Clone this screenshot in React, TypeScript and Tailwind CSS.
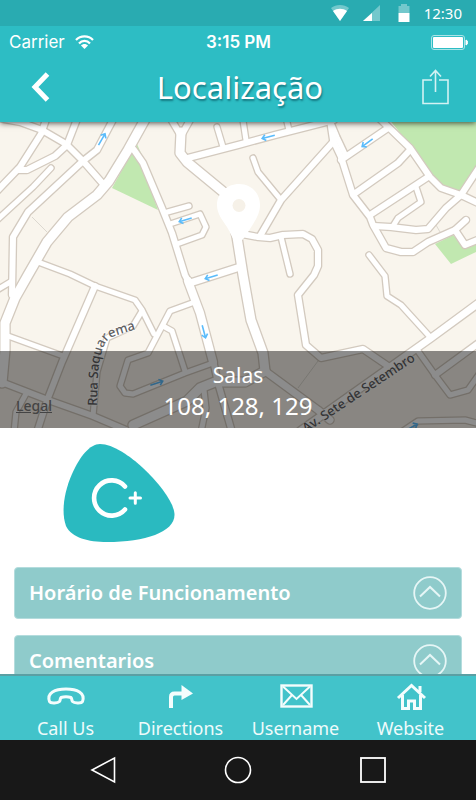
import React from "react";

type Road = { d: string; w: number };

const roads: Road[] = [
  { w: 9, d: "M148 114 L128 150 L109 181 L97 195 L68 217 L47 242 L28 275 L15 298 L5 323 L5 350 L2 383" },
  { w: 6, d: "M-2 118 L20 122 L42 130 L66 144 L83 161 L104 185" },
  { w: 6, d: "M48 114 L41 134 L20 167 L-3 191" },
  { w: 6, d: "M79 114 L67 145 L55 156 L27 170 L18 170" },
  { w: 6, d: "M116 114 L97 150 L83 161 L28 212 L13 237 L12 295" },
  { w: 5, d: "M51 168 L33 187 L-3 220" },
  { w: 5, d: "M38 262 L70 274 L95 286 L135 300 L142 310 L154 334" },
  { w: 6, d: "M134 150 L143 163 L162 208 L172 233 L185 275 L188 281" },
  { w: 8, d: "M188 281 L200 313 L213 362" },
  { w: 5, d: "M164 213 L189 206" },
  { w: 5, d: "M170 224 L200 214 L206 227 L202 235 L177 244" },
  { w: 6, d: "M168 114 L181 136 L190 120" },
  { w: 9, d: "M181 132 L180 153 L187 162 L227 195 L237 237 L243 275 L251 320 L263 353 L265 371" },
  { w: 7, d: "M265 371 L318 410 L330 420" },
  { w: 6, d: "M188 158 L238 145 L275 135 L334 120" },
  { w: 5, d: "M217 127 L223 147" },
  { w: 5, d: "M242 114 L246 140" },
  { w: 5, d: "M285 114 L289 130" },
  { w: 6, d: "M330 120 L333 140 L341 157 L353 195 L370 217 L373 225 L386 248 L401 252 L413 252 L428 242 L455 230 L466 220" },
  { w: 6, d: "M333 142 L281 200 L260 236" },
  { w: 5, d: "M253 158 L258 172 L281 200" },
  { w: 5, d: "M332 125 L337 137 L346 156" },
  { w: 6, d: "M341 160 L388 128" },
  { w: 6, d: "M379 118 L410 148 L430 177 L441 188 L461 195 L480 204" },
  { w: 6, d: "M410 150 L398 163 L354 194" },
  { w: 6, d: "M428 177 L370 215" },
  { w: 5, d: "M416 187 L421 202 L398 218 L393 226" },
  { w: 6, d: "M374 226 L391 227 L416 230 L428 229 L446 208 L461 195 L480 166" },
  { w: 6, d: "M455 230 L465 245 L480 239" },
  { w: 5, d: "M369 255 L385 276 L387 296 L401 305 L431 338" },
  { w: 6, d: "M242 234 L258 237 L270 238 L283 235 L303 234 L312 239 L318 250 L318 266 L314 275 L298 295 L306 345 L321 358 L363 349 L388 366" },
  { w: 5, d: "M281 237 L290 274" },
  { w: 7, d: "M190 283 L240 267" },
  { w: 5, d: "M-3 290 L12 281" },
  { w: 5, d: "M8 336 L63 356" },
  { w: 6, d: "M95 286 L62 362 L48 398 L37 432" },
  { w: 6, d: "M4 383 L48 400 L93 416 L126 430" },
  { w: 5, d: "M27 392 L16 412 L14 432" },
  { w: 5, d: "M142 311 L133 326 L107 338 L97 372 L93 416" },
  { w: 5, d: "M192 303 L170 311 L148 353 L128 360 L120 386 L125 393 L133 394 L185 373 L213 363" },
  { w: 5, d: "M163 326 L172 331 L185 371" },
  { w: 9, d: "M265 371 L245 382 L215 382 L200 388 L187 401 L133 425" },
  { w: 5, d: "M204 390 L206 408 L201 432" },
  { w: 6, d: "M213 360 L218 383 L232 432" },
  { w: 7, d: "M480 302 L431 338 L300 431" },
  { w: 5, d: "M418 351 L435 375 L450 395 L468 390 L480 373" },
  { w: 6, d: "M480 342 L435 375" },
  { w: 5, d: "M400 433 L418 421 L465 420 L480 424" },
];

const arrows: { x: number; y: number; angle: number }[] = [
  { x: 102, y: 139, angle: -60 },
  { x: 185, y: 220, angle: 163 },
  { x: 268, y: 137, angle: 166 },
  { x: 367, y: 143, angle: 144 },
  { x: 211, y: 277, angle: 163 },
  { x: 204, y: 332, angle: 75 },
  { x: 157, y: 383, angle: -18 },
  { x: 412, y: 427, angle: -30 },
];

function StreetMap() {
  return (
    <svg
      className="block h-[306px] w-full"
      viewBox="0 122 476 306"
      preserveAspectRatio="xMidYMid slice"
      role="img"
      aria-label="Mapa"
    >
      <rect x="-500" y="100" width="1500" height="400" fill="#f9f5ed" />
      <g fill="#c1e8b0">
        <path d="M132 152 L112 188 L158 210 L142 165 Z" />
        <path d="M137 144 L135 152 L144 160 Z" />
        <path d="M388 118 L480 118 L480 170 L461 193 L441 187 L410 145 Z" />
        <path d="M435 244 L453 235 L465 248 L480 243 L480 250 L451 264 Z" />
      </g>
      <g stroke="#dcd8d0" strokeWidth="1" fill="none">
        <path d="M32 217 L47 232 M436 225 L440 232 M318 361 L298 388" />
      </g>
      <g fill="none" stroke="#d3cabf" strokeLinecap="round" strokeLinejoin="round">
        {roads.map((r, i) => (
          <path key={i} d={r.d} strokeWidth={r.w + 2.6} />
        ))}
      </g>
      <g fill="none" stroke="#ffffff" strokeLinecap="round" strokeLinejoin="round">
        {roads.map((r, i) => (
          <path key={i} d={r.d} strokeWidth={r.w} />
        ))}
      </g>
      <g fill="none" stroke="#5bbcfb" strokeWidth="1.6">
        {arrows.map((a, i) => (
          <path key={i} d="M-7 0 H6 M2.5 -3 L6 0 L2.5 3" transform={`translate(${a.x} ${a.y}) rotate(${a.angle})`} />
        ))}
      </g>
      <path
        fill="#ffffff"
        d="M239 184 C251 184 260 193 260 205 C260 214 255 221 250 229 C246 235 243 241 238 243 C233 241 231 234 227 227 C222 219 217 214 217 205 C217 193 227 184 239 184 Z"
      />
      <circle cx="239" cy="205.5" r="6.5" fill="#f6f1e8" />
      <defs>
        <path id="rua" d="M97 406 L98 376 C99 360 102 344 110 338 C116 335 124 333 146 326" />
        <path id="avenida" d="M306 433 L440 344" />
      </defs>
      <g
        className="font-['Noto_Sans',sans-serif]"
        fill="#5f5f63"
        stroke="#ffffff"
        strokeOpacity="0.5"
        strokeWidth="2"
        paintOrder="stroke"
      >
        <text className="text-[13px] font-medium">
          <textPath href="#rua">Rua Saquarema</textPath>
        </text>
        <text className="text-[13px] font-medium">
          <textPath href="#avenida">Av. Sete de Setembro</textPath>
        </text>
      </g>
    </svg>
  );
}

function AndroidStatus() {
  return (
    <div className="flex h-[26px] items-center justify-end bg-[#29abb1] pr-3.5 text-white">
      <svg className="mr-3.5" width="18" height="16" viewBox="0 0 18 16">
        <path d="M0 3 C5 -1 13 -1 18 3 L9 16 Z" fill="#fff" fillOpacity="0.35" />
        <path d="M2 6 C6 3 12 3 16 6 L9 16 Z" fill="#fff" />
      </svg>
      <svg className="mr-[18px]" width="17" height="16" viewBox="0 0 17 16">
        <path d="M17 0 V16 H0 Z" fill="#fff" fillOpacity="0.35" />
        <path d="M9 8 V16 H0 Z" fill="#fff" />
      </svg>
      <svg className="mr-3.5" width="12" height="18" viewBox="0 0 12 18">
        <path d="M0.5 2 H3 V0 H9 V2 H11.5 V9 H0.5 Z" fill="#fff" fillOpacity="0.35" />
        <path d="M0.5 9 H11.5 V18 H0.5 Z" fill="#fff" />
      </svg>
      <span className="text-[15px] leading-5">12:30</span>
    </div>
  );
}

function CarrierStatus() {
  return (
    <div className="grid h-8 grid-cols-3 items-center pr-2 pl-[9px] font-['Inter',sans-serif] text-[17px] leading-5">
      <span className="flex items-center gap-2.5">
        Carrier
        <svg width="19" height="14" viewBox="0 0 19 14" fill="none" stroke="#fff" strokeWidth="2.2">
          <path d="M1 5 C5.5 0.2 13.5 0.2 18 5" />
          <path d="M4 8.5 C7 5 12 5 15 8.5" />
          <path d="M6 10.5 C8 8.5 11 8.5 13 10.5 L9.5 14 Z" fill="#fff" stroke="none" />
        </svg>
      </span>
      <span className="text-center font-semibold">3:15 PM</span>
      <svg className="justify-self-end" width="37" height="15" viewBox="0 0 37 15">
        <rect x="0.5" y="0.5" width="33" height="14" rx="2.5" fill="none" stroke="#a9e4e7" />
        <rect x="2" y="2" width="30" height="11" rx="1" fill="#fff" />
        <path d="M35 5 C37 5 37 10 35 10 Z" fill="#fff" stroke="#fff" />
      </svg>
    </div>
  );
}

function Header() {
  return (
    <header className="relative z-10 bg-[#2dbdc4] text-white shadow-[0_1px_6px_rgba(0,0,0,0.7)]">
      <AndroidStatus />
      <CarrierStatus />
      <div className="grid h-16 grid-cols-[1fr_auto_1fr] items-center pr-[27px] pb-1.5 pl-[31px]">
        <button type="button" aria-label="Voltar" className="justify-self-start">
          <svg width="19" height="30" viewBox="0 0 19 30" fill="none" stroke="#fff" strokeWidth="5">
            <path d="M16.5 2 L4 15 L16.5 28" />
          </svg>
        </button>
        <h1 className="text-[31px] leading-10 [text-shadow:1px_2px_2px_rgba(0,70,80,0.55)]">Localização</h1>
        <button type="button" aria-label="Compartilhar" className="justify-self-end">
          <svg width="27" height="36" viewBox="0 0 27 36" fill="none" stroke="#d3f2f3" strokeWidth="1.6">
            <path d="M10 11 H1 V34.5 H26 V11 H17" />
            <path d="M13.5 23 V1.5 M8 7.5 L13.5 1.5 L19 7.5" />
          </svg>
        </button>
      </div>
    </header>
  );
}

function Logo() {
  return (
    <svg className="mt-4 ml-[63px] block" width="112" height="99" viewBox="63 444 112 99" role="img" aria-label="C+">
      <path
        fill="#2abac0"
        d="M100 444 C113 444 130 456 143 468 C160 484 174.5 503 174.5 515 C174.5 532 145 542 107 542 C88 542 72 538 66 526 C61 512 64 492 72 474 C80 456 90 444 100 444 Z"
      />
      <g fill="none" stroke="#fff" strokeLinecap="round">
        <path strokeWidth="4.6" d="M125 486.5 A17.6 17.6 0 1 0 125 509.5" />
        <path strokeWidth="3" d="M130 498 H140.5 M135.3 492.7 V503.3" />
      </g>
    </svg>
  );
}

function Section({ title }: { title: string }) {
  return (
    <button
      type="button"
      aria-expanded="false"
      className="flex h-[52px] w-full items-center justify-between rounded border border-[#b4dcdd] bg-[#8fcbcb] px-3.5 text-left text-[20px] leading-6 font-semibold text-white"
    >
      {title}
      <svg width="34" height="34" viewBox="0 0 34 34" fill="none" stroke="#e6f6f6" strokeWidth="1.8">
        <circle cx="17" cy="17" r="15.8" />
        <path d="M7 20.5 L17 11 L27 20.5" strokeWidth="2" />
      </svg>
    </button>
  );
}

const tabs: { label: string; icon: React.ReactNode }[] = [
  {
    label: "Call Us",
    icon: (
      <path
        strokeWidth="3"
        strokeLinejoin="round"
        d="M3.5 17.5 C0.5 9 9 5 20 5 C31 5 39.5 9 36.5 17.5 C35 20 28 19 26.5 17.5 C25.5 16 26 14.5 25 13.5 C22 12.5 18 12.5 15 13.5 C14 14.5 14.5 16 13.5 17.5 C12 19 5 20 3.5 17.5 Z"
      />
    ),
  },
  {
    label: "Directions",
    icon: (
      <>
        <path strokeWidth="4" d="M10 24 V13 Q10 9.5 13.5 9.5 H23" />
        <path stroke="none" fill="#f4fdfd" d="M20.5 1 L32 9.5 L20.5 16 Z" />
      </>
    ),
  },
  {
    label: "Username",
    icon: (
      <>
        <rect x="5.5" y="1.5" width="30" height="21" strokeWidth="2.4" />
        <path strokeWidth="2" d="M7 2.5 L20.5 15 L34 2.5 M7 21 L16 11 M34 21 L25 11" />
      </>
    ),
  },
  {
    label: "Website",
    icon: (
      <>
        <path strokeWidth="3" d="M7 14 L20.5 1.5 L34 14 M29 8 V2" />
        <path strokeWidth="3" d="M11.5 11 V24.5 H17.5 V17 H23.5 V24.5 H29.5 V11" />
      </>
    ),
  },
];

function TabBar() {
  return (
    <nav className="grid h-[66px] grid-cols-4 border-t-2 border-[#5b9fa3] bg-[#42c3ca] px-2 text-[#effbfb]">
      {tabs.map((t) => (
        <a key={t.label} href="#" className="flex flex-col items-center pt-2">
          <svg className="overflow-visible" width="40" height="24" viewBox="0 0 40 24" fill="none" stroke="#f4fdfd">
            {t.icon}
          </svg>
          <span className="mt-2 text-[18px] leading-6">{t.label}</span>
        </a>
      ))}
    </nav>
  );
}

function SystemBar() {
  return (
    <nav className="grid h-[60px] grid-cols-3 place-items-center bg-[#181818] px-9">
      <button type="button" aria-label="Back">
        <svg width="26" height="28" viewBox="0 0 26 28" fill="none" stroke="#fff" strokeWidth="1.6">
          <path d="M24.5 2 V26 L2 14 Z" />
        </svg>
      </button>
      <button type="button" aria-label="Home">
        <svg width="28" height="28" viewBox="0 0 28 28" fill="none" stroke="#fff" strokeWidth="1.6">
          <circle cx="14" cy="14" r="12.5" />
        </svg>
      </button>
      <button type="button" aria-label="Recents">
        <svg width="28" height="28" viewBox="0 0 28 28" fill="none" stroke="#fff" strokeWidth="1.8">
          <rect x="2" y="2" width="24" height="24" />
        </svg>
      </button>
    </nav>
  );
}

export default function App() {
  return (
    <div className="flex h-screen flex-col overflow-hidden bg-white font-['Noto_Sans',sans-serif]">
      <Header />
      <main className="min-h-0 flex-1 overflow-hidden">
        <div className="relative">
          <StreetMap />
          <div className="absolute inset-x-0 bottom-0 h-[77px] bg-black/45 pt-2 text-center text-white">
            <p className="text-[21px] leading-8">Salas</p>
            <p className="text-[24px] leading-[30px]">108, 128, 129</p>
            <a href="#" className="absolute bottom-3 left-4 text-[14px] leading-5 font-medium text-[#444] underline">
              Legal
            </a>
          </div>
        </div>
        <Logo />
        <div className="mt-6 flex flex-col gap-4 px-3.5">
          <Section title="Horário de Funcionamento" />
          <Section title="Comentarios" />
        </div>
      </main>
      <TabBar />
      <SystemBar />
    </div>
  );
}
